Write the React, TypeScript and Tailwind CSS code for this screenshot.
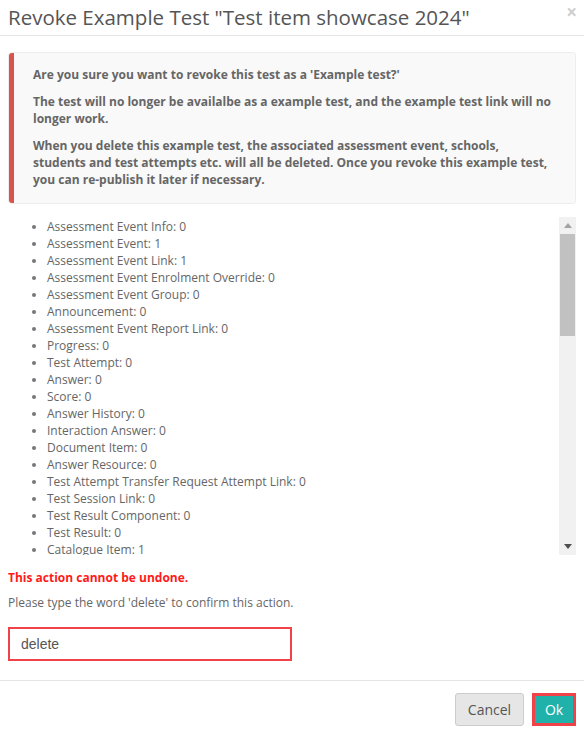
import React from "react";

const counts: [string, number][] = [
  ["Assessment Event Info", 0],
  ["Assessment Event", 1],
  ["Assessment Event Link", 1],
  ["Assessment Event Enrolment Override", 0],
  ["Assessment Event Group", 0],
  ["Announcement", 0],
  ["Assessment Event Report Link", 0],
  ["Progress", 0],
  ["Test Attempt", 0],
  ["Answer", 0],
  ["Score", 0],
  ["Answer History", 0],
  ["Interaction Answer", 0],
  ["Document Item", 0],
  ["Answer Resource", 0],
  ["Test Attempt Transfer Request Attempt Link", 0],
  ["Test Session Link", 0],
  ["Test Result Component", 0],
  ["Test Result", 0],
  ["Catalogue Item", 1],
  ["Catalogue Item Link", 1],
  ["Test Item", 0],
];

function FakeScrollbar() {
  return (
    <div className="flex w-[17px] shrink-0 flex-col bg-[#f1f1f1]">
      <div className="flex h-[17px] items-center justify-center">
        <svg width="8" height="5" viewBox="0 0 8 5">
          <path d="M0 5 L4 0 L8 5 Z" fill="#a3a3a3" />
        </svg>
      </div>
      <div className="mx-[1px] h-[102px] bg-[#c1c1c1]" />
      <div className="flex-1" />
      <div className="flex h-[17px] items-center justify-center">
        <svg width="8" height="5" viewBox="0 0 8 5">
          <path d="M0 0 L8 0 L4 5 Z" fill="#505050" />
        </svg>
      </div>
    </div>
  );
}

export default function App() {
  return (
    <div
      className="w-[584px] h-[734px] bg-white text-[#555] overflow-hidden"
      style={{ fontFamily: '"Open Sans", "Noto Sans", sans-serif' }}
    >
      {/* header */}
      <div className="flex h-[36px] items-start justify-between border-b border-[#e5e5e5] pl-[8px] pr-[7px]">
        <h4 className="mt-[3px] text-[20.5px] leading-[28px] text-[#555]">
          Revoke Example Test "Test item showcase 2024"
        </h4>
        <button className="mt-[1px] text-[19px] font-bold leading-[22px] text-[#cfcfcf]">×</button>
      </div>

      {/* body */}
      <div className="px-[8px] pt-[16px]">
        <div className="flex rounded-[3px] border border-[#eee] bg-[#f9f9f9]">
          <div className="w-[5px] shrink-0 rounded-l-[3px] bg-[#d9534f]" />
          <div className="flex flex-col gap-[10px] pl-[19px] pr-[23px] pt-[13px] pb-[15px] text-[12px] font-bold leading-[17px] text-[#666]">
            <p>Are you sure you want to revoke this test as a 'Example test?'</p>
            <p>
              The test will no longer be availalbe as a example test, and the example test link will no
              longer work.
            </p>
            <p>
              When you delete this example test, the associated assessment event, schools,
              students and test attempts etc. will all be deleted. Once you revoke this example test,
              you can re-publish it later if necessary.
            </p>
          </div>
        </div>

        <div className="mt-[13px] flex h-[338px]">
          <div className="flex-1 overflow-hidden">
            <ul className="list-disc pl-[39px] pt-[1px] text-[12px] leading-[17px] text-[#666] marker:text-[#777]">
              {counts.map(([name, n]) => (
                <li key={name}>
                  {name}: {n}
                </li>
              ))}
            </ul>
          </div>
          <FakeScrollbar />
        </div>

        <p className="mt-[14px] text-[12px] font-bold leading-[17px] text-[#ff1a1a]">
          This action cannot be undone.
        </p>
        <p className="mt-[8px] text-[12px] leading-[17px] text-[#666]">
          Please type the word 'delete' to confirm this action.
        </p>
        <input
          readOnly
          value="delete"
          className="mt-[16px] h-[34px] w-[284px] border-2 border-[#f04248] px-[11px] text-[14px] text-[#555] outline-none"
          style={{ fontFamily: '"Liberation Sans", Arial, sans-serif' }}
        />
      </div>

      {/* footer */}
      <div className="mt-[19px] flex justify-end gap-[8px] border-t border-[#e5e5e5] px-[8px] pt-[12px]">
        <button className="h-[33px] w-[69px] rounded-[3px] border border-[#ccc] bg-[#e6e6e6] text-[14px] text-[#555]">
          Cancel
        </button>
        <button className="h-[33px] w-[44px] border-[3px] border-[#f04248] bg-[#20b2aa] text-[14px] text-white">
          Ok
        </button>
      </div>
    </div>
  );
}
